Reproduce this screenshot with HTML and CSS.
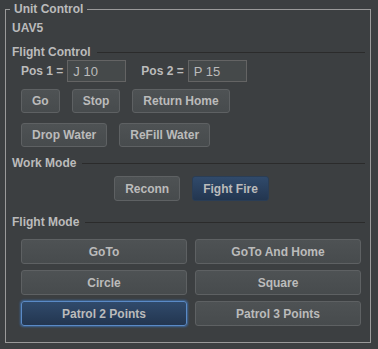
FILE: index.html
```html
<!DOCTYPE html>
<html lang="en">
<head>
  <meta charset="UTF-8">
  <title>Unit Control</title>
  <link rel="stylesheet" href="styles.css">
</head>
<body>
  <fieldset class="panel">
    <legend class="panel-title">Unit Control</legend>
    <div class="unit-name">UAV5</div>

    <div class="section-title"><span>Flight Control</span></div>
    <div class="pos-row">
      <span class="pos-label">Pos 1 =</span>
      <input class="pos-field" type="text" value="J 10">
      <span class="pos-label pos-label-2">Pos 2 =</span>
      <input class="pos-field" type="text" value="P 15">
    </div>
    <div class="btn-row">
      <button class="btn">Go</button>
      <button class="btn">Stop</button>
      <button class="btn">Return Home</button>
    </div>
    <div class="btn-row btn-row-2">
      <button class="btn">Drop Water</button>
      <button class="btn">ReFill Water</button>
    </div>

    <div class="section-title work-title"><span>Work Mode</span></div>
    <div class="work-row">
      <button class="btn btn-tall">Reconn</button>
      <button class="btn btn-tall btn-blue">Fight Fire</button>
    </div>

    <div class="section-title flight-title"><span>Flight Mode</span></div>
    <div class="mode-grid">
      <button class="btn">GoTo</button>
      <button class="btn">GoTo And Home</button>
      <button class="btn">Circle</button>
      <button class="btn">Square</button>
      <button class="btn btn-blue btn-focus">Patrol 2 Points</button>
      <button class="btn">Patrol 3 Points</button>
    </div>
  </fieldset>
</body>
</html>
```

FILE: styles.css
```css
body {
  margin: 0;
  padding: 2px 0 0 5px;
  background-color: #3c3f41;
  color: #bbbbbb;
  font-family: "Liberation Sans", Arial, sans-serif;
  font-size: 12px;
  font-weight: bold;
  line-height: 14px;
}
.panel {
  width: 366px;
  box-sizing: border-box;
  margin: 0;
  padding: 5px 5px 16px 6px;
  border: 1px solid #9a9a9a;
}
.panel-title {
  margin-left: -2px;
  padding: 0 4px;
  line-height: 14px;
}
.unit-name {
  height: 14px;
}
.section-title {
  display: flex;
  align-items: center;
  margin-top: 10px;
  height: 14px;
}
.section-title::after {
  content: "";
  flex: 1;
  height: 1px;
  margin-left: 6px;
  background-color: #2b2b2b;
}
.work-title {
  margin-top: 9px;
}
.flight-title {
  margin-top: 14px;
}
.pos-row {
  display: flex;
  align-items: center;
  margin-top: 1px;
  padding-left: 9px;
  height: 22px;
}
.pos-label {
  margin-right: 4px;
}
.pos-label-2 {
  margin-left: 15px;
}
.pos-field {
  width: 59px;
  height: 22px;
  box-sizing: border-box;
  margin: 0;
  padding: 0 5px;
  border: 1px solid #646464;
  background-color: #45494a;
  color: #bbbbbb;
  font-family: "Liberation Sans", Arial, sans-serif;
  font-size: 13px;
  outline: none;
}
.btn-row {
  display: flex;
  gap: 12px;
  margin-top: 7px;
  padding-left: 9px;
}
.btn-row-2 {
  margin-top: 10px;
}
.btn {
  height: 24px;
  margin: 0;
  padding: 0 10px;
  border: 1px solid #5e6163;
  border-radius: 3px;
  background: linear-gradient(#4e5254, #474b4d);
  color: #bbbbbb;
  font-family: "Liberation Sans", Arial, sans-serif;
  font-size: 12px;
  font-weight: bold;
  white-space: nowrap;
}
.btn-tall {
  height: 25px;
}
.btn-blue {
  background: linear-gradient(#304a6b, #233650);
  border-color: #2a3d55;
}
.btn-focus {
  border-color: #5a8ac6;
  box-shadow: 0 0 2px 1px #3d6699;
}
.work-row {
  display: flex;
  justify-content: center;
  gap: 12px;
  margin-top: 6px;
  padding-left: 6px;
}
.mode-grid {
  display: grid;
  grid-template-columns: 1fr 1fr;
  grid-auto-rows: 25px;
  column-gap: 8px;
  row-gap: 6px;
  margin-top: 10px;
  padding: 0 4px 0 9px;
}
.mode-grid .btn {
  height: 25px;
}
```
